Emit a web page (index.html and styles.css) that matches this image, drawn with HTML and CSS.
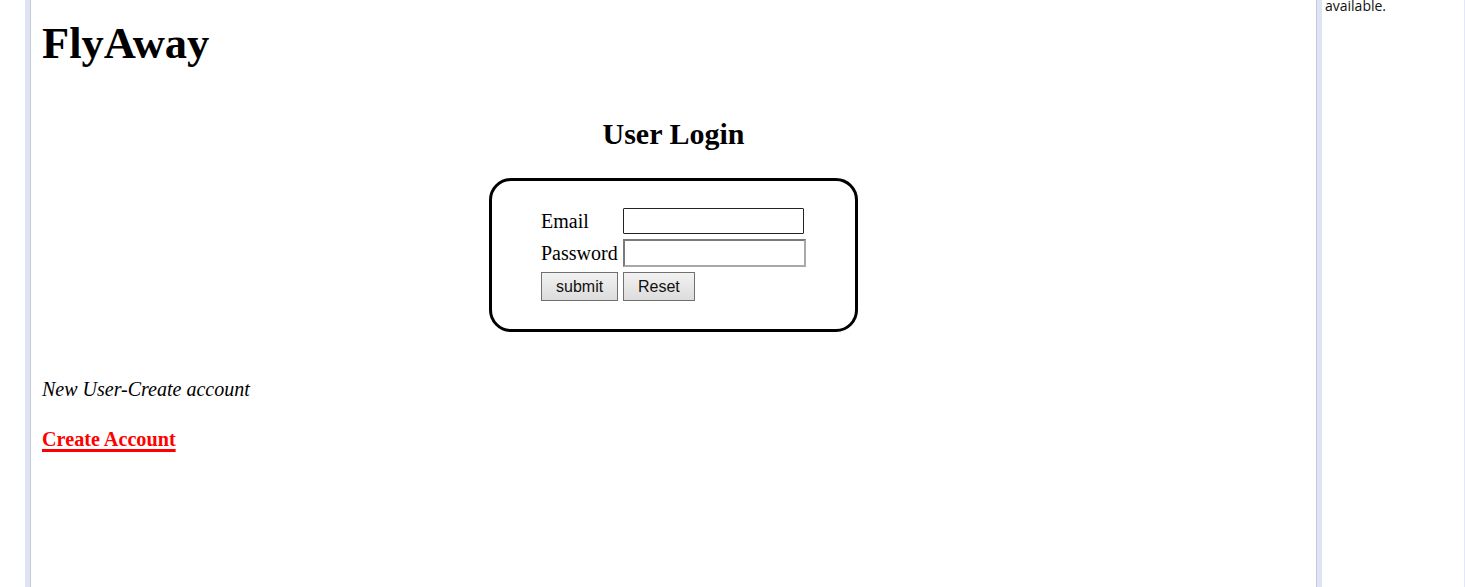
FILE: index.html
```html
<!DOCTYPE html>
<html>
<head>
<meta charset="utf-8">
<title>FlyAway</title>
<link rel="stylesheet" href="styles.css">
</head>
<body>
<div class="page">
  <main class="main">
    <h1 class="brand">FlyAway</h1>
    <h2 class="title">User Login</h2>
    <form class="login-box">
      <div class="login-grid">
        <label class="lbl" for="email">Email</label>
        <input class="inp inp-email" id="email" type="text">
        <label class="lbl" for="pwd">Password</label>
        <input class="inp inp-pwd" id="pwd" type="password">
        <div class="cell"><button class="btn" type="submit">submit</button></div>
        <div class="cell"><button class="btn" type="reset">Reset</button></div>
      </div>
    </form>
    <p class="new-user">New User-Create account</p>
    <a class="create" href="#">Create Account</a>
  </main>
  <aside class="side">
    <p class="side-text">available.</p>
  </aside>
</div>
</body>
</html>
```
FILE: styles.css
```css
html, body {
  margin: 0;
  padding: 0;
  background: #fff;
}
body {
  font-family: "Liberation Serif", "Times New Roman", serif;
  color: #000;
  overflow: hidden;
}
.page {
  display: flex;
  height: 587px;
  padding-left: 25px;
}
.main {
  flex: 1;
  min-width: 0;
  border-left: 5px solid #dfe4f4;
  border-right: 5px solid #dfe4f4;
  padding: 0 12px;
  box-shadow: inset 1px 0 0 #c4c8d4, inset -1px 0 0 #c4c8d4;
}
.brand {
  font-size: 44.5px;
  font-weight: bold;
  margin: 19px 0 0;
  line-height: 49px;
}
.title {
  text-align: center;
  font-size: 30px;
  font-weight: bold;
  margin: 49px 0 0;
  line-height: 34px;
}
.login-box {
  width: 369px;
  box-sizing: border-box;
  margin: 27px auto 0;
  border: 3px solid #000;
  border-radius: 22px;
  padding: 27px 40px 28px 49px;
}
.login-grid {
  display: grid;
  grid-template-columns: 77px auto;
  column-gap: 5px;
  row-gap: 5px;
  align-items: center;
  justify-content: start;
}
.lbl {
  font-size: 20px;
  line-height: 23px;
}
.inp {
  box-sizing: border-box;
  margin: 0;
  padding: 0 3px;
  font-size: 14px;
  background: #fff;
}
.inp-email {
  width: 181px;
  height: 26px;
  border: 1px solid #222;
  border-radius: 1px;
}
.inp-pwd {
  width: 183px;
  height: 28px;
  border: 2px solid #767676;
  border-color: #7a7a7a #a9a9a9 #a9a9a9 #7a7a7a;
}
.cell {
  display: flex;
}
.btn {
  box-sizing: border-box;
  height: 29px;
  margin: 0;
  padding: 0 14px;
  font-family: "Liberation Sans", Arial, sans-serif;
  font-size: 16px;
  color: #111;
  border: 1px solid #707070;
  border-radius: 0;
  background: linear-gradient(#f2f2f2, #dcdcdc);
}
.new-user {
  font-style: italic;
  font-size: 20px;
  line-height: 23px;
  margin: 46px 0 0;
}
.create {
  display: inline-block;
  margin-top: 27px;
  font-size: 20.2px;
  line-height: 23px;
  font-weight: bold;
  color: #ff0000;
  text-decoration: underline;
  text-decoration-thickness: 3px;
  text-underline-offset: 3px;
}
.side {
  flex: none;
  width: 143px;
  border-right: 1px solid #e4e8f6;
  padding-left: 3px;
  box-sizing: border-box;
}
.side-text {
  margin: -4px 0 0;
  font-family: "Open Sans", "Noto Sans", sans-serif;
  font-size: 14px;
  line-height: 19px;
  color: #111;
}
```
